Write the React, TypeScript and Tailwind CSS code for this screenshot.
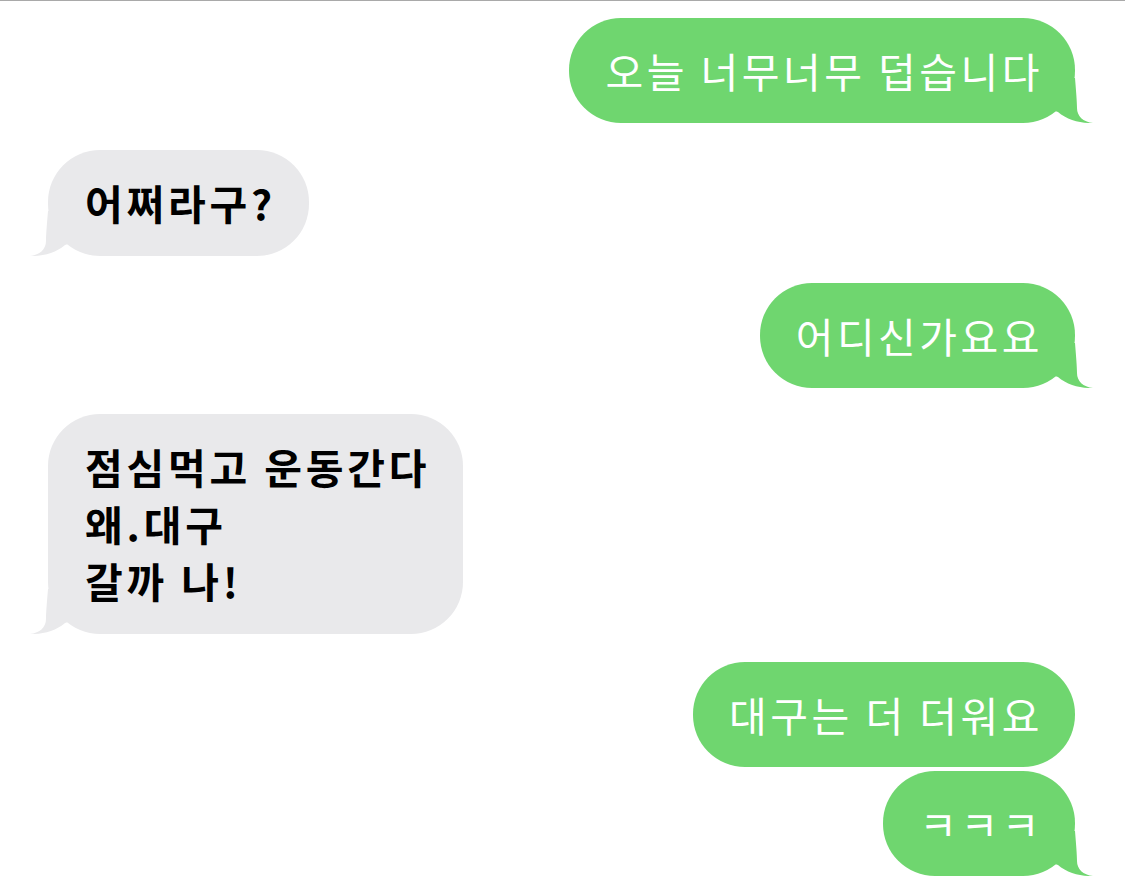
type Msg = { side: 'me' | 'them'; lines: string[]; tail: boolean; gap: string };

const messages: Msg[] = [
  { side: 'me', lines: ['오늘 너무너무 덥습니다'], tail: true, gap: 'mt-[17px]' },
  { side: 'them', lines: ['어쩌라구?'], tail: true, gap: 'mt-[27px]' },
  { side: 'me', lines: ['어디신가요요'], tail: true, gap: 'mt-[27px]' },
  { side: 'them', lines: ['점심먹고 운동간다', '왜.대구', '갈까 나!'], tail: true, gap: 'mt-[26px]' },
  { side: 'me', lines: ['대구는 더 더워요'], tail: false, gap: 'mt-[28px]' },
  { side: 'me', lines: ['ㅋㅋㅋ'], tail: true, gap: 'mt-[4px]' },
];

function Tail({ side }: { side: 'me' | 'them' }) {
  const me = side === 'me';
  return (
    <svg
      viewBox="0 0 40 45"
      className={
        me
          ? 'absolute bottom-0 right-[-20px] w-[40px] h-[45px]'
          : 'absolute bottom-0 left-[-20px] w-[40px] h-[45px] -scale-x-100'
      }
    >
      <path
        d="M0 0 L20 0 C21 12 22 24 22 30 C22 38 28 44 38 45 C26 45.5 12 42 3 34 L0 33 Z"
        fill={me ? '#6fd66f' : '#e9e9eb'}
      />
    </svg>
  );
}

function Bubble({ msg }: { msg: Msg }) {
  const me = msg.side === 'me';
  return (
    <div className={`flex ${me ? 'justify-end pr-[50px]' : 'justify-start pl-[48px]'} ${msg.gap}`}>
      <div
        className={
          me
            ? 'relative rounded-[52px] bg-[#6fd66f] text-white font-normal tracking-[3.5px] pl-[36px] pr-[32px] pt-[24px] pb-[24px]'
            : 'relative rounded-[52px] bg-[#e9e9eb] text-black font-bold tracking-[3.8px] pl-[37px] pr-[33px] pt-[24px] pb-[25px]'
        }
      >
        {msg.tail && <Tail side={msg.side} />}
        <div className="relative text-[41px] leading-[57px] whitespace-nowrap">
          {msg.lines.map((l) => (
            <div key={l}>{l}</div>
          ))}
        </div>
      </div>
    </div>
  );
}

export default function App() {
  return (
    <div
      className="w-[1125px] h-[876px] overflow-hidden bg-white border-t border-[#a9a9a9]"
      style={{ fontFamily: '"Noto Sans CJK KR", "Noto Sans", sans-serif' }}
    >
      {messages.map((m, i) => (
        <Bubble key={i} msg={m} />
      ))}
    </div>
  );
}
